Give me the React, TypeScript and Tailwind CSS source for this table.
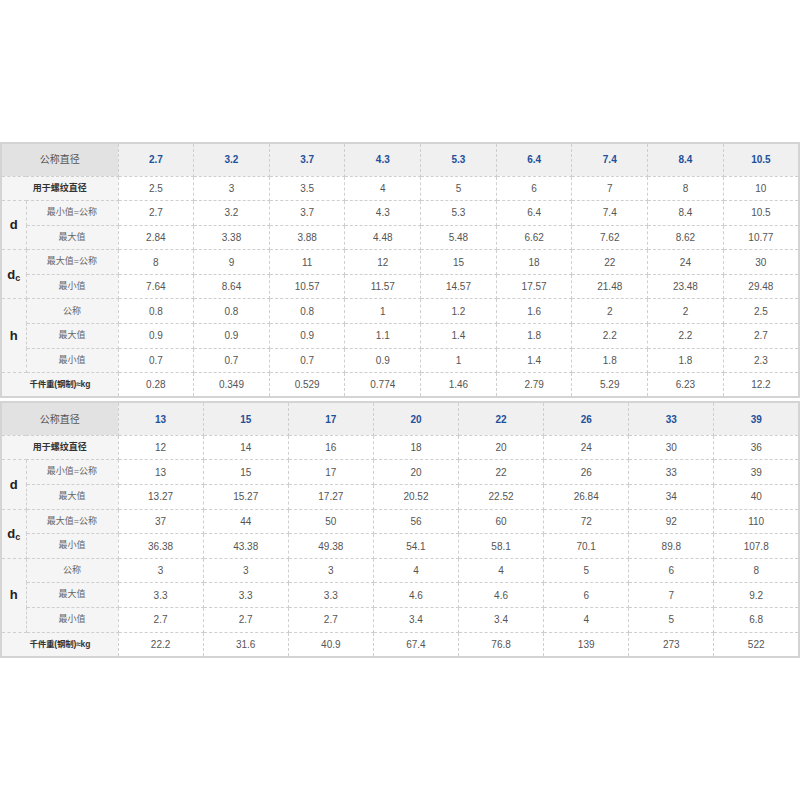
import React from "react";

type Group = {
  sym: string;
  sub?: string;
  rows: { label: string; vals: string[] }[];
};

type Spec = {
  sizes: string[];
  thread: string[];
  groups: Group[];
  weight: string[];
};

const table1: Spec = {
  sizes: ["2.7", "3.2", "3.7", "4.3", "5.3", "6.4", "7.4", "8.4", "10.5"],
  thread: ["2.5", "3", "3.5", "4", "5", "6", "7", "8", "10"],
  groups: [
    {
      sym: "d",
      rows: [
        { label: "最小值=公称", vals: ["2.7", "3.2", "3.7", "4.3", "5.3", "6.4", "7.4", "8.4", "10.5"] },
        { label: "最大值", vals: ["2.84", "3.38", "3.88", "4.48", "5.48", "6.62", "7.62", "8.62", "10.77"] },
      ],
    },
    {
      sym: "d",
      sub: "c",
      rows: [
        { label: "最大值=公称", vals: ["8", "9", "11", "12", "15", "18", "22", "24", "30"] },
        { label: "最小值", vals: ["7.64", "8.64", "10.57", "11.57", "14.57", "17.57", "21.48", "23.48", "29.48"] },
      ],
    },
    {
      sym: "h",
      rows: [
        { label: "公称", vals: ["0.8", "0.8", "0.8", "1", "1.2", "1.6", "2", "2", "2.5"] },
        { label: "最大值", vals: ["0.9", "0.9", "0.9", "1.1", "1.4", "1.8", "2.2", "2.2", "2.7"] },
        { label: "最小值", vals: ["0.7", "0.7", "0.7", "0.9", "1", "1.4", "1.8", "1.8", "2.3"] },
      ],
    },
  ],
  weight: ["0.28", "0.349", "0.529", "0.774", "1.46", "2.79", "5.29", "6.23", "12.2"],
};

const table2: Spec = {
  sizes: ["13", "15", "17", "20", "22", "26", "33", "39"],
  thread: ["12", "14", "16", "18", "20", "24", "30", "36"],
  groups: [
    {
      sym: "d",
      rows: [
        { label: "最小值=公称", vals: ["13", "15", "17", "20", "22", "26", "33", "39"] },
        { label: "最大值", vals: ["13.27", "15.27", "17.27", "20.52", "22.52", "26.84", "34", "40"] },
      ],
    },
    {
      sym: "d",
      sub: "c",
      rows: [
        { label: "最大值=公称", vals: ["37", "44", "50", "56", "60", "72", "92", "110"] },
        { label: "最小值", vals: ["36.38", "43.38", "49.38", "54.1", "58.1", "70.1", "89.8", "107.8"] },
      ],
    },
    {
      sym: "h",
      rows: [
        { label: "公称", vals: ["3", "3", "3", "4", "4", "5", "6", "8"] },
        { label: "最大值", vals: ["3.3", "3.3", "3.3", "4.6", "4.6", "6", "7", "9.2"] },
        { label: "最小值", vals: ["2.7", "2.7", "2.7", "3.4", "3.4", "4", "5", "6.8"] },
      ],
    },
  ],
  weight: ["22.2", "31.6", "40.9", "67.4", "76.8", "139", "273", "522"],
};

const cell = "border border-dashed border-[#cfcfcf] text-center align-middle p-0";
const num = `${cell} text-[10px] text-[#555] bg-white`;

const SpecTable = ({ spec }: { spec: Spec }) => {
  return (
    <table className="w-[800px] table-fixed border-collapse border-2 border-solid border-[#d4d4d4]">
      <colgroup>
        <col className="w-[25px]" />
        <col className="w-[92px]" />
        {spec.sizes.map((s) => (
          <col key={s} />
        ))}
      </colgroup>
      <tbody>
        <tr className="h-[33px]">
          <td colSpan={2} className={`${cell} bg-[#e2e2e2] text-[10px] text-[#555]`}>
            公称直径
          </td>
          {spec.sizes.map((s) => (
            <td key={s} className={`${cell} bg-[#f0f0f0] text-[10px] font-bold text-[#1d4f9a]`}>
              {s}
            </td>
          ))}
        </tr>
        <tr className="h-[24.6px]">
          <td colSpan={2} className={`${cell} bg-[#f5f5f5] text-[9px] font-bold text-[#333]`}>
            用于螺纹直径
          </td>
          {spec.thread.map((v, i) => (
            <td key={i} className={num}>
              {v}
            </td>
          ))}
        </tr>
        {spec.groups.map((g, gi) =>
          g.rows.map((r, ri) => (
            <tr key={`${gi}-${ri}`} className="h-[24.6px]">
              {ri === 0 && (
                <td rowSpan={g.rows.length} className={`${cell} bg-[#f5f5f5] text-[13px] font-bold text-[#222]`}>
                  {g.sym}
                  {g.sub && <sub className="text-[9px] font-bold">{g.sub}</sub>}
                </td>
              )}
              <td className={`${cell} bg-[#f5f5f5] text-[9px] text-[#666]`}>{r.label}</td>
              {r.vals.map((v, i) => (
                <td key={i} className={num}>
                  {v}
                </td>
              ))}
            </tr>
          ))
        )}
        <tr className="h-[24.6px]">
          <td colSpan={2} className={`${cell} bg-[#f5f5f5] text-[8.5px] font-bold text-[#333] tracking-[-0.2px]`}>
            千件重(钢制)≈kg
          </td>
          {spec.weight.map((v, i) => (
            <td key={i} className={num}>
              {v}
            </td>
          ))}
        </tr>
      </tbody>
    </table>
  );
};

export default function App() {
  return (
    <div
      className="w-[800px] h-[800px] bg-white pt-[142px] flex flex-col gap-[3px]"
      style={{ fontFamily: '"Liberation Sans", Arial, "Noto Sans CJK SC", sans-serif' }}
    >
      <SpecTable spec={table1} />
      <SpecTable spec={table2} />
    </div>
  );
}
